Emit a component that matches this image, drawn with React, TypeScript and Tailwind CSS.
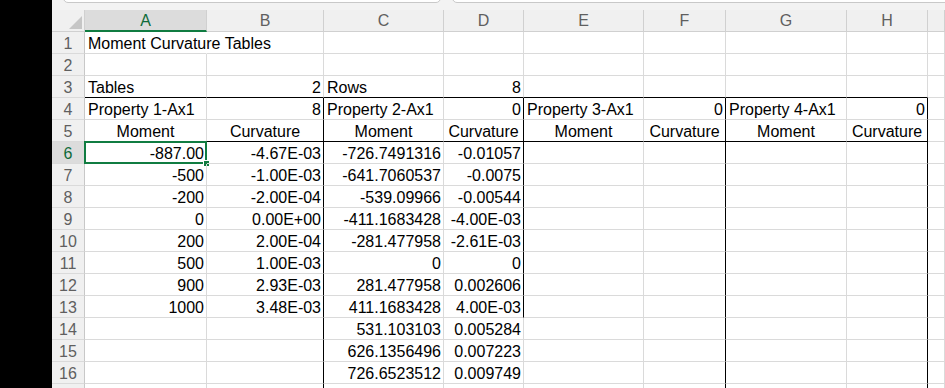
import React from "react";

const cols = [
  { key: "A", w: "w-[122px]" },
  { key: "B", w: "w-[117px]" },
  { key: "C", w: "w-[120px]" },
  { key: "D", w: "w-[80px]" },
  { key: "E", w: "w-[120px]" },
  { key: "F", w: "w-[82px]" },
  { key: "G", w: "w-[121px]" },
  { key: "H", w: "w-[81px]" },
  { key: "I", w: "w-[17px]" },
];

type Cell = { v: string; a?: "l" | "r" | "c" };

const moment1 = ["-887.00", "-500", "-200", "0", "200", "500", "900", "1000"];
const curv1 = ["-4.67E-03", "-1.00E-03", "-2.00E-04", "0.00E+00", "2.00E-04", "1.00E-03", "2.93E-03", "3.48E-03"];
const moment2 = ["-726.7491316", "-641.7060537", "-539.09966", "-411.1683428", "-281.477958", "0", "281.477958", "411.1683428", "531.103103", "626.1356496", "726.6523512"];
const curv2 = ["-0.01057", "-0.0075", "-0.00544", "-4.00E-03", "-2.61E-03", "0", "0.002606", "4.00E-03", "0.005284", "0.007223", "0.009749"];

function cellAt(r: number, c: number): Cell | null {
  if (r === 1 && c === 0) return { v: "Moment Curvature Tables", a: "l" };
  if (r === 3) {
    const row: Cell[] = [{ v: "Tables", a: "l" }, { v: "2", a: "r" }, { v: "Rows", a: "l" }, { v: "8", a: "r" }];
    return row[c] ?? null;
  }
  if (r === 4) {
    const row: Cell[] = [
      { v: "Property 1-Ax1", a: "l" }, { v: "8", a: "r" },
      { v: "Property 2-Ax1", a: "l" }, { v: "0", a: "r" },
      { v: "Property 3-Ax1", a: "l" }, { v: "0", a: "r" },
      { v: "Property 4-Ax1", a: "l" }, { v: "0", a: "r" },
    ];
    return row[c] ?? null;
  }
  if (r === 5 && c < 8) return { v: c % 2 === 0 ? "Moment" : "Curvature", a: "c" };
  if (r >= 6) {
    const i = r - 6;
    if (c === 0 && moment1[i]) return { v: moment1[i], a: "r" };
    if (c === 1 && curv1[i]) return { v: curv1[i], a: "r" };
    if (c === 2 && moment2[i]) return { v: moment2[i], a: "r" };
    if (c === 3 && curv2[i]) return { v: curv2[i], a: "r" };
  }
  return null;
}

function rightBorder(r: number, c: number) {
  if (r === 1 && c === 0) return "border-r-transparent";
  if (r >= 4 && (c === 1 || c === 5 || c === 7)) return "border-r-black";
  if (r >= 4 && r <= 13 && c === 3) return "border-r-black";
  return "border-r-[#dadada]";
}

function bottomBorder(r: number, c: number) {
  if ((r === 3 || r === 5) && c < 8) return "border-b-black";
  return "border-b-[#dadada]";
}

function alignClass(a?: string) {
  if (a === "r") return "justify-end pr-[2px]";
  if (a === "c") return "justify-center";
  return "justify-start pl-[3px]";
}

function TopStrip() {
  return (
    <div className="relative h-[10px] shrink-0 overflow-hidden bg-[#f3f3f3]">
      <div className="absolute left-[11px] top-[-20px] h-[23px] w-[378px] rounded-[5px] border border-[#c9c9c9] bg-white" />
      <div className="absolute left-[400px] top-[-20px] h-[23px] w-[600px] rounded-[5px] border border-[#c9c9c9] bg-white" />
    </div>
  );
}

function HeaderRow() {
  return (
    <div className="flex h-[22px] shrink-0">
      <div className="relative w-[33px] shrink-0 border-r border-b border-[#d0d0d0] bg-[#f0f0f0]">
        <svg className="absolute right-[2px] bottom-[2px]" width="13" height="13" viewBox="0 0 13 13">
          <polygon points="13,0 13,13 0,13" fill="#c6c6c6" />
        </svg>
      </div>
      {cols.map((col) =>
        col.key === "A" ? (
          <div key={col.key} className={`${col.w} shrink-0 flex items-center justify-center border-r border-r-[#d0d0d0] border-b-2 border-b-[#107c41] bg-[#dcdcdc] pt-[2px] text-[16px] text-[#0f6b39]`}>
            {col.key}
          </div>
        ) : (
          <div key={col.key} className={`${col.w} shrink-0 flex items-center justify-center border-r border-b border-[#d0d0d0] bg-[#f0f0f0] pt-[1px] text-[16px] text-[#5f5f5f]`}>
            {col.key === "I" ? "" : col.key}
          </div>
        )
      )}
    </div>
  );
}

function Row({ r }: { r: number }) {
  const selected = r === 6;
  return (
    <div className="flex h-[22px] shrink-0">
      <div
        className={`w-[33px] shrink-0 flex items-center justify-center border-r border-b border-r-[#c8c8c8] border-b-[#dadada] pt-[2px] text-[16px] ${
          selected ? "bg-[#dcdcdc] text-[#0f6b39]" : "bg-[#f0f0f0] text-[#5f5f5f]"
        }`}
      >
        {r <= 16 ? r : ""}
      </div>
      {cols.map((col, c) => {
        const cell = cellAt(r, c);
        return (
          <div
            key={col.key}
            className={`${col.w} shrink-0 relative flex items-center whitespace-nowrap border-r border-b ${rightBorder(r, c)} ${bottomBorder(r, c)} ${alignClass(cell?.a)} pt-[2px] text-[16px] text-black`}
          >
            {cell ? <span>{cell.v}</span> : null}
            {selected && c === 0 ? (
              <>
                <div className="absolute -inset-px border-2 border-[#107c41]" />
                <div className="absolute right-[-4px] bottom-[-4px] h-[7px] w-[7px] border border-white bg-[#107c41]" />
              </>
            ) : null}
          </div>
        );
      })}
    </div>
  );
}

export default function App() {
  const rows = Array.from({ length: 17 }, (_, i) => i + 1);
  return (
    <div className="flex h-[388px] w-[945px] overflow-hidden bg-white font-['Liberation_Sans',Arial,sans-serif]">
      <div className="w-[52px] shrink-0 bg-black" />
      <div className="flex min-w-0 flex-1 flex-col overflow-hidden">
        <TopStrip />
        <HeaderRow />
        {rows.map((r) => (
          <Row key={r} r={r} />
        ))}
      </div>
    </div>
  );
}
